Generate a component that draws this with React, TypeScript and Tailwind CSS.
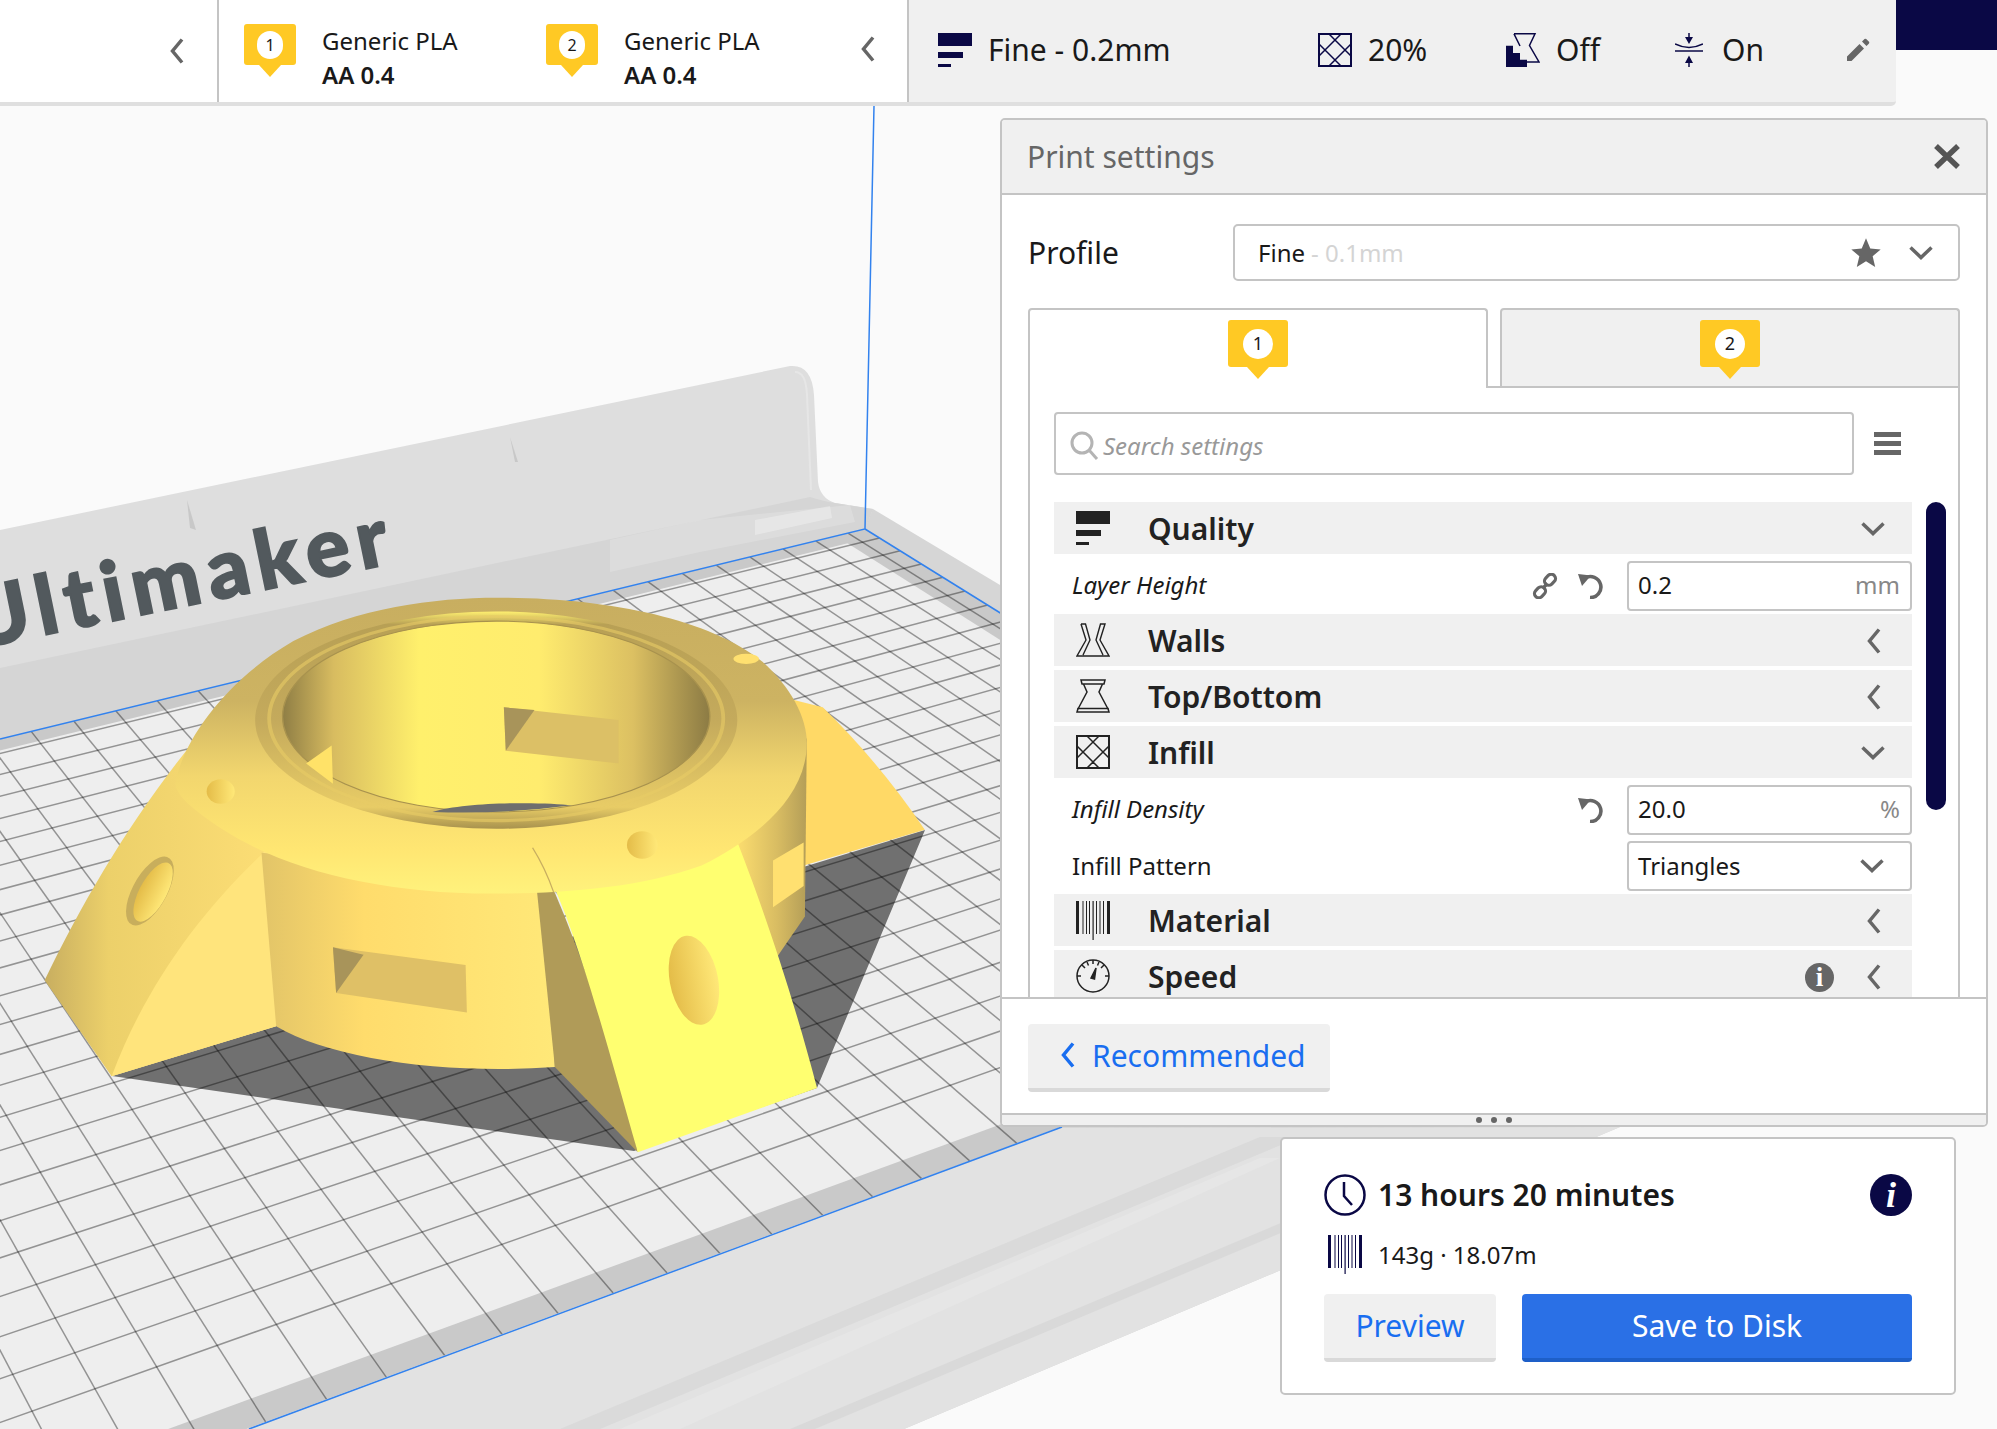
import type { ReactNode } from "react";

const NAVY = "#0a0845";

// build plate projection, numbers taken from the two vanishing points of the bed edges
const A = { x: 865, y: 529 };
const VP_B = { x: -1057, y: -662 };
const VP_A = { x: 6098, y: -741 };
const P_END = -0.2605;
const Q_END = -0.2045;

function proj(p: number, q: number) {
  const w = p + q + 1;
  return {
    x: (p * VP_B.x + q * VP_A.x + A.x) / w,
    y: (p * VP_B.y + q * VP_A.y + A.y) / w,
  };
}

function poly(points: { x: number; y: number }[]) {
  return points.map((pt) => `${pt.x.toFixed(1)},${pt.y.toFixed(1)}`).join(" ");
}

function Viewport() {
  const familyA = Array.from({ length: 25 }, (_, i) => -0.2385 + i * 0.0105);
  const familyB = Array.from({ length: 34 }, (_, i) => -0.00324 - i * 0.0061);
  return (
    <svg className="absolute inset-0" width="1997" height="1429" viewBox="0 0 1997 1429">
      <defs>
        <clipPath id="bed">
          <polygon points={poly([proj(0, 0), proj(P_END, 0), proj(P_END, Q_END), proj(0, Q_END)])} />
        </clipPath>
        <linearGradient id="wing" x1="0" x2="1" y1="0" y2="0">
          <stop offset="0" stopColor="#c8ae60" />
          <stop offset="0.25" stopColor="#ecd06a" />
          <stop offset="1" stopColor="#ffe077" />
        </linearGradient>
        <linearGradient id="drum" x1="0" x2="1" y1="0" y2="0">
          <stop offset="0" stopColor="#e2c468" />
          <stop offset="0.35" stopColor="#ffdc6c" />
          <stop offset="1" stopColor="#ffe878" />
        </linearGradient>
        <linearGradient id="dome" x1="0" x2="0" y1="0" y2="1">
          <stop offset="0" stopColor="#c8ae60" />
          <stop offset="0.35" stopColor="#cdb362" />
          <stop offset="0.6" stopColor="#f2d66e" />
          <stop offset="0.85" stopColor="#ffe672" />
          <stop offset="1" stopColor="#fff27c" />
        </linearGradient>
        <linearGradient id="ring" x1="0" x2="0" y1="0" y2="1">
          <stop offset="0" stopColor="#fff070" />
          <stop offset="0.06" stopColor="#b8a055" />
          <stop offset="0.5" stopColor="#c4aa5c" />
          <stop offset="0.9" stopColor="#e8cc66" />
          <stop offset="1" stopColor="#a8924e" />
        </linearGradient>
        <linearGradient id="bore" x1="0" x2="1" y1="0" y2="0">
          <stop offset="0" stopColor="#8f7e45" />
          <stop offset="0.12" stopColor="#d8bc60" />
          <stop offset="0.32" stopColor="#fff06c" />
          <stop offset="0.6" stopColor="#ffec6e" />
          <stop offset="0.82" stopColor="#dcc062" />
          <stop offset="1" stopColor="#8c7b44" />
        </linearGradient>
        <linearGradient id="side" x1="0" x2="1" y1="0" y2="0">
          <stop offset="0" stopColor="#ffe070" />
          <stop offset="0.6" stopColor="#d8bc62" />
          <stop offset="1" stopColor="#b49e58" />
        </linearGradient>
        <linearGradient id="hole" x1="0" x2="1" y1="0" y2="0">
          <stop offset="0" stopColor="#e4bc48" />
          <stop offset="1" stopColor="#ffe878" />
        </linearGradient>
      </defs>

      <rect width="1997" height="1429" fill="#fafafa" />

      {/* platform around the plate */}
      <polygon points="873,509 1040,609 1700,1000 1620,1127 904,1429 249,1429 0,1429 0,739" fill="#d6d6d6" />
      <polygon points="1060,1128 1620,1127 904,1429 249,1429" fill="#e2e2e2" />
      <polygon points="560,1429 1260,1137 1300,1137 600,1429" fill="#dadada" />
      <polygon points="790,1429 1300,1215 1300,1225 815,1429" fill="#d9d9d9" />
      <polygon points="620,1429 1260,1158 1280,1158 680,1429" fill="#e6e6e6" />

      {/* printable area */}
      <polygon points={poly([proj(0, 0), proj(P_END, 0), proj(P_END, Q_END), proj(0, Q_END)])} fill="#eeeeee" />
      <g clipPath="url(#bed)">
        <polygon points={poly([proj(0, 0), proj(-0.006, 0), proj(-0.006, Q_END), proj(0, Q_END)])} fill="#c9c9c9" />
        <polygon points={poly([proj(0, 0), proj(0, -0.0055), proj(P_END, -0.0055), proj(P_END, 0)])} fill="#c9c9c9" />
        <polygon points={poly([proj(P_END, 0), proj(P_END + 0.0065, 0), proj(P_END + 0.0065, Q_END), proj(P_END, Q_END)])} fill="#c9c9c9" />
        <polygon points="112,1076 634,1151 817,1088 925,830 800,868 276,1026" fill="#707070" />
        {familyA.map((p) => {
          const a = proj(p, 0);
          const b = proj(p, Q_END);
          return <line key={p} x1={a.x} y1={a.y} x2={b.x} y2={b.y} stroke="#000" strokeOpacity="0.38" strokeWidth="1.5" />;
        })}
        {familyB.map((q) => {
          const a = proj(0, q);
          const b = proj(P_END, q);
          return <line key={q} x1={a.x} y1={a.y} x2={b.x} y2={b.y} stroke="#000" strokeOpacity="0.38" strokeWidth="1.5" />;
        })}
      </g>

      {/* back wall */}
      <path d="M0 530 L790 366 Q812 364 814 395 L818 482 Q820 498 835 503 L873 509 L865 529 L0 739 Z" fill="#dedede" />
      <path d="M0 668 L810 497 Q826 502 835 503 L873 509 L865 529 L0 739 Z" fill="#d5d5d5" />
      <path d="M795 372 Q806 372 807 395 L811 490" fill="none" stroke="#e6e6e6" strokeWidth="2" />
      <polygon points="610,540 700,520 850,505 855,522 700,552 610,572" fill="#ffffff" fillOpacity="0.18" />
      <polygon points="755,520 830,506 832,518 755,535" fill="#ffffff" fillOpacity="0.3" />
      <polygon points="187,500 190,528 196,530" fill="#c8c8c8" />
      <polygon points="510,437 515,462 518,462" fill="#c8c8c8" />
      <text
        x="400"
        y="562"
        textAnchor="end"
        transform="rotate(-11.6 400 562)"
        fontFamily="'Lato', sans-serif"
        fontWeight="900"
        fontSize="82"
        letterSpacing="8"
        fill="#52595d"
        stroke="#52595d"
        strokeWidth="2"
      >
        Ultimaker
      </text>

      {/* blue edges of the build volume */}
      <polyline points="874,106 865,529 0,739" fill="none" stroke="#3282ee" strokeWidth="1.5" />
      <line x1="865" y1="529" x2="1010" y2="619" stroke="#3282ee" strokeWidth="1.5" />
      <line x1="249" y1="1429" x2="1062" y2="1127" stroke="#3282ee" strokeWidth="1.5" />

      {/* printed model, authored in crop coordinates */}
      <g transform="translate(0 340) scale(0.6378 0.5102)">
        <path d="M1195 690 L1290 720 Q1380 830 1450 960 L1260 1030 Z" fill="#ffd966" />
        <path d="M70 1255 C130 1100 200 950 295 800 L470 930 L410 1010 L433 1345 L175 1443 Z" fill="url(#wing)" />
        <path d="M175 1443 C230 1260 320 1110 430 985 L433 1345 Z" fill="#ffe47c" />
        <ellipse cx="235" cy="1080" rx="28" ry="72" transform="rotate(22 235 1080)" fill="#c8ae5c" />
        <ellipse cx="240" cy="1082" rx="22" ry="62" transform="rotate(22 240 1082)" fill="url(#hole)" />

        <path d="M1265 780 L1262 1130 L1215 1215 L1150 965 Z" fill="url(#side)" />
        <polygon points="1212,1020 1260,985 1260,1070 1212,1112" fill="#ffe070" />

        <path d="M410 1005 L433 1345 C520 1410 700 1440 870 1425 L860 1060 Z" fill="url(#drum)" />
        <polygon points="522,1190 730,1225 732,1318 527,1280" fill="#dfc066" />
        <polygon points="522,1190 570,1205 527,1280" fill="#a8945a" />

        <path d="M835 995 C880 1090 950 1330 1000 1592 L870 1425 Z" fill="#b09b58" />
        <path d="M835 995 C890 1090 940 1330 1000 1592 L1281 1466 C1240 1270 1190 1090 1150 965 Q1000 1010 835 995 Z" fill="#ffff70" />

        <path
          d="M275 870 C285 790 350 670 460 590 C560 525 680 505 780 505 C950 505 1110 545 1195 630 C1240 680 1265 740 1265 790 C1265 900 1180 980 1100 1030 C1000 1075 880 1085 770 1085 C600 1085 450 1040 350 960 C300 920 275 890 275 870 Z"
          fill="url(#dome)"
        />
        <path d="M835 995 Q855 1035 868 1082" fill="none" stroke="#c8ae60" strokeWidth="2" />
        <ellipse cx="778" cy="745" rx="378" ry="213" fill="url(#ring)" />
        <ellipse cx="778" cy="742" rx="356" ry="200" fill="none" stroke="#e8cc66" strokeOpacity="0.6" strokeWidth="6" />
        <ellipse cx="778" cy="738" rx="335" ry="187" fill="url(#bore)" stroke="#a8924e" strokeWidth="2" />
        <polygon points="790,720 970,745 970,830 793,805" fill="#dcc066" />
        <polygon points="790,720 838,725 793,805" fill="#a8945a" />
        <path d="M678 925 C730 905 850 905 897 912 Q790 930 678 925 Z" fill="#6e6e6e" />
        <polygon points="480,830 520,795 522,870" fill="#ffe268" />
        <ellipse cx="346" cy="885" rx="22" ry="24" fill="url(#hole)" />
        <ellipse cx="1007" cy="990" rx="24" ry="27" fill="url(#hole)" />
        <ellipse cx="1170" cy="625" rx="20" ry="10" fill="#ffe070" />
        <ellipse cx="1088" cy="1255" rx="38" ry="88" transform="rotate(-8 1088 1255)" fill="url(#hole)" />
      </g>
    </svg>
  );
}

function ChevronLeft({ className = "" }: { className?: string }) {
  return (
    <svg className={className} width="15" height="26" viewBox="0 0 15 26" fill="none" stroke="currentColor" strokeWidth="3.5">
      <path d="M13 1.5 L3.5 13 L13 24.5" />
    </svg>
  );
}

function ChevronDown({ className = "" }: { className?: string }) {
  return (
    <svg className={className} width="24" height="14" viewBox="0 0 24 14" fill="none" stroke="currentColor" strokeWidth="3.5">
      <path d="M1.5 1.5 L12 11.5 L22.5 1.5" />
    </svg>
  );
}

function QualityIcon({ className = "" }: { className?: string }) {
  return (
    <svg className={className} width="34" height="34" viewBox="0 0 34 34" fill="currentColor">
      <rect x="0" y="0" width="34" height="13" />
      <rect x="0" y="19" width="25" height="6" />
      <rect x="0" y="31" width="13" height="3" />
    </svg>
  );
}

function InfillIcon({ className = "" }: { className?: string }) {
  return (
    <svg className={className} width="34" height="34" viewBox="0 0 34 34" fill="none" stroke="currentColor" strokeWidth="1.5">
      <rect x="1" y="1" width="32" height="32" strokeWidth="2" />
      <path d="M11 1 L33 23 M1 11 L23 33 M23 1 L1 23 M33 11 L11 33" />
    </svg>
  );
}

function WallsIcon({ className = "" }: { className?: string }) {
  return (
    <svg className={className} width="34" height="34" viewBox="0 0 34 34" fill="none" stroke="currentColor" strokeWidth="1.4">
      <path d="M5 1 H9.5 L14 17 L7 32 M5 1 L10 17 L1 33 H33 L24 17 L29 1 H24.5 L20 17 L27 32" />
    </svg>
  );
}

function TopBottomIcon({ className = "" }: { className?: string }) {
  return (
    <svg className={className} width="34" height="34" viewBox="0 0 34 34" fill="none" stroke="currentColor" strokeWidth="1.5">
      <path d="M5 1 H29 L28 5 H6 Z" />
      <path d="M7.5 5 L11 13 L2 30 M26.5 5 L23 13 L32 30" />
      <path d="M1 33 H33 L32 29.5 H2 Z" />
    </svg>
  );
}

function MaterialIcon({ className = "" }: { className?: string }) {
  return (
    <svg className={className} width="34" height="39" viewBox="0 0 34 39" fill="currentColor">
      <rect x="0" y="0" width="3" height="33" />
      <rect x="6.5" y="0" width="1" height="33" />
      <rect x="10" y="0" width="1" height="33" />
      <rect x="13" y="0" width="1" height="33" />
      <rect x="16.5" y="0" width="1.2" height="39" />
      <rect x="20" y="0" width="1" height="33" />
      <rect x="23.5" y="0" width="1" height="33" />
      <rect x="27" y="0" width="1" height="33" />
      <rect x="31" y="0" width="3" height="33" />
    </svg>
  );
}

function SpeedIcon({ className = "" }: { className?: string }) {
  return (
    <svg className={className} width="34" height="34" viewBox="0 0 34 34" fill="none" stroke="currentColor" strokeWidth="1.5">
      <circle cx="17" cy="17" r="16" />
      <path d="M17 1 V5 M6 6 L9 9 M28 6 L25 9 M1 17 H5 M33 17 H29 M11 3 L12.5 6.5 M23 3 L21.5 6.5" />
      <path d="M15 19 L20 9 L18.5 20 Z" fill="currentColor" />
    </svg>
  );
}

function SupportIcon() {
  return (
    <svg width="34" height="34" viewBox="0 0 34 34" fill="none" stroke={NAVY} strokeWidth="1.5">
      <path d="M8 0.8 H29 L23.5 12.5 L33 29 H21 M8 0.8 L14 13" />
      <path d="M0 12.7 H7 V20 H14 V26.7 H21 V34 H0 Z" fill={NAVY} stroke="none" />
    </svg>
  );
}

function AdhesionIcon() {
  return (
    <svg width="28" height="34" viewBox="0 0 28 34" fill="none" stroke={NAVY} strokeWidth="1.5">
      <path d="M14 0 V7 M14 25 V34" />
      <path d="M10 4 H18 L14 11 Z M10 30 H18 L14 22.5 Z" fill={NAVY} stroke="none" />
      <path d="M0 11 Q14 18 28 11 M0 18 H28" />
    </svg>
  );
}

function Pencil() {
  return (
    <svg width="24" height="24" viewBox="0 0 24 24" fill="#666666">
      <path d="M1 18.5 V23 H5.5 L18 10.5 L13.5 6 Z M20.5 8 L23 5.5 Q23.6 4.6 23 3.8 L20.2 1 Q19.4 0.4 18.5 1 L16 3.5 Z" />
    </svg>
  );
}

function UndoIcon() {
  return (
    <svg width="28" height="26" viewBox="0 0 28 26" fill="none" stroke="#666666" strokeWidth="3.6">
      <path d="M8 5 A10.5 10.5 0 1 1 13 24.5" />
      <path d="M1 1 L14 2.5 L5 13 Z" fill="#666666" stroke="none" />
    </svg>
  );
}

function LinkIcon() {
  return (
    <svg width="26" height="26" viewBox="0 0 26 26" fill="none" stroke="#666666" strokeWidth="3.2">
      <rect x="12" y="2.5" width="12" height="8.5" rx="4.2" transform="rotate(-45 18 6.75)" />
      <rect x="2" y="15" width="12" height="8.5" rx="4.2" transform="rotate(-45 8 19.25)" />
      <path d="M10.5 15.5 L15.5 10.5" />
    </svg>
  );
}

function Badge({ n, tab = false }: { n: number; tab?: boolean }) {
  return (
    <div
      className={
        tab
          ? "relative flex h-[47px] w-[60px] shrink-0 items-center justify-center rounded-[3px] bg-[#ffc924]"
          : "relative flex h-[41px] w-[52px] shrink-0 items-center justify-center rounded-[3px] bg-[#ffc924]"
      }
    >
      <div
        className={
          tab
            ? "flex h-[30px] w-[30px] items-center justify-center rounded-full bg-white text-[18px] text-[#191919]"
            : "flex h-[28px] w-[26px] items-center justify-center rounded-full bg-white text-[16px] text-[#191919]"
        }
      >
        {n}
      </div>
      <div className="absolute left-1/2 top-full h-0 w-0 -translate-x-1/2 border-x-[11px] border-t-[12px] border-x-transparent border-t-[#ffc924]" />
    </div>
  );
}

function Extruder({ n }: { n: number }) {
  return (
    <div className="flex w-[302px] items-start pt-[24px]">
      <Badge n={n} />
      <div className="ml-[26px] text-[24px] leading-[34px] text-[#191919]">
        <div>Generic PLA</div>
        <div className="font-semibold">AA 0.4</div>
      </div>
    </div>
  );
}

function TopBar() {
  return (
    <div className="relative flex h-[106px] text-[#191919]">
      <div className="flex w-[217px] items-center justify-end border-b-4 border-[#dfdfdf] bg-white pr-[33px]">
        <ChevronLeft className="text-[#666666]" />
      </div>
      <div className="w-[690px] border-b-4 border-[#dfdfdf] bg-white">
        <div className="flex h-full items-start border-l-2 border-[#c4c4c4] pl-[25px]">
          <Extruder n={1} />
          <Extruder n={2} />
          <ChevronLeft className="ml-[12px] mt-[36px] text-[#666666]" />
        </div>
      </div>
      <div className="w-[989px] rounded-br-[5px] border-b-4 border-[#dfdfdf] bg-[#f0f0f0]">
        <div className="flex h-full items-center border-l-2 border-[#c4c4c4] pb-[3px] pl-[29px] text-[30px]">
          <div className="flex w-[380px] items-center gap-[16px]">
            <QualityIcon className="text-[#0a0845]" />
            Fine - 0.2mm
          </div>
          <div className="flex w-[188px] items-center gap-[16px]">
            <InfillIcon className="text-[#0a0845]" />
            20%
          </div>
          <div className="flex w-[169px] items-center gap-[16px]">
            <SupportIcon />
            Off
          </div>
          <div className="flex w-[171px] items-center gap-[19px]">
            <AdhesionIcon />
            On
          </div>
          <Pencil />
        </div>
      </div>
      <div className="h-[50px] flex-1 bg-[#0a0845]" />
    </div>
  );
}

function Section({
  icon,
  label,
  open = false,
  info = false,
}: {
  icon: ReactNode;
  label: string;
  open?: boolean;
  info?: boolean;
}) {
  return (
    <div className="flex h-[52px] shrink-0 items-center bg-[#f0f0f0] pl-[22px] pr-[26px] text-[#222222]">
      {icon}
      <span className="ml-[38px] text-[30px] font-semibold">{label}</span>
      {info && (
        <div className="ml-auto mr-[26px] mt-[2px] flex h-[29px] w-[29px] items-center justify-center rounded-full bg-[#666666] font-['Liberation_Serif',serif] text-[27px] font-bold text-white">
          i
        </div>
      )}
      <div className={info ? "mt-[2px] flex w-[26px] justify-center" : "ml-auto mt-[2px] flex w-[26px] justify-center"}>
        {open ? <ChevronDown className="text-[#666666]" /> : <ChevronLeft className="text-[#666666]" />}
      </div>
    </div>
  );
}

function Field({ children }: { children: ReactNode }) {
  return (
    <div className="flex h-[50px] w-[285px] shrink-0 items-center self-start rounded-[4px] border-2 border-[#c4c4c4] bg-white pl-[9px] pr-[10px] text-[24px] text-[#191919]">
      {children}
    </div>
  );
}

function PrintSettings() {
  return (
    <div className="ml-[1000px] mt-[12px] flex h-[1009px] w-[988px] flex-col overflow-hidden rounded-[5px] border-2 border-[#c4c4c4] bg-white text-[#191919]">
      <div className="flex h-[75px] shrink-0 items-center justify-between border-b-2 border-[#c4c4c4] bg-[#f0f0f0] pl-[25px] pr-[26px]">
        <span className="text-[30px] text-[#666666]">Print settings</span>
        <svg width="26" height="25" viewBox="0 0 26 25" stroke="#555555" strokeWidth="5.5" fill="none">
          <path d="M2 2 L24 23 M24 2 L2 23" />
        </svg>
      </div>

      <div className="mt-[29px] flex h-[57px] shrink-0 items-center pl-[26px]">
        <span className="w-[205px] text-[30px]">Profile</span>
        <div className="flex h-[57px] w-[727px] items-center rounded-[5px] border-2 border-[#c4c4c4] pl-[23px] pr-[25px] text-[24px]">
          Fine<span className="ml-[6px] text-[#d4d4d4]">- 0.1mm</span>
          <svg className="ml-auto" width="34" height="32" viewBox="0 0 24 24" fill="#666666">
            <path d="M12 1 L15.2 8.6 L23 9.3 L17 14.4 L18.9 22.5 L12 18.1 L5.1 22.5 L7 14.4 L1 9.3 L8.8 8.6 Z" />
          </svg>
          <ChevronDown className="ml-[26px] text-[#666666]" />
        </div>
      </div>

      <div className="ml-[26px] mt-[27px] flex h-[80px] w-[932px] shrink-0">
        <div className="flex h-[80px] w-[460px] justify-center rounded-t-[4px] border-x-2 border-t-2 border-[#c4c4c4] bg-white pt-[10px]">
          <Badge n={1} tab />
        </div>
        <div className="flex-1 border-b-2 border-[#c4c4c4] pl-[12px]">
          <div className="flex h-full justify-center rounded-t-[4px] border-x-2 border-t-2 border-[#c4c4c4] bg-[#f0f0f0] pt-[10px]">
            <Badge n={2} tab />
          </div>
        </div>
      </div>

      <div className="ml-[26px] h-[609px] w-[932px] shrink-0 overflow-hidden border-x-2 border-[#c4c4c4] pl-[24px]">
        <div className="flex items-center pt-[24px]">
          <div className="flex h-[63px] w-[800px] items-center gap-[3px] rounded-[4px] border-2 border-[#c4c4c4] pl-[14px] text-[24px] italic text-[#999999]">
            <svg width="30" height="30" viewBox="0 0 30 30" fill="none" stroke="#b4b4b4" strokeWidth="3" className="mt-[4px]">
              <circle cx="12" cy="12" r="10" />
              <path d="M19 19 L27 28" />
            </svg>
            <span className="pt-[5px]">Search settings</span>
          </div>
          <div className="ml-[20px] flex w-[27px] flex-col gap-[4px]">
            <div className="h-[5px] bg-[#666666]" />
            <div className="h-[5px] bg-[#666666]" />
            <div className="h-[5px] bg-[#666666]" />
          </div>
        </div>

        <div className="mt-[27px] flex">
          <div className="flex w-[858px] shrink-0 flex-col gap-[4px]">
            <Section icon={<QualityIcon />} label="Quality" open />
            <div className="flex h-[52px] shrink-0 items-center pl-[18px] pt-[3px] text-[24px] italic">
              <span className="pb-[2px]">Layer Height</span>
              <div className="ml-auto mr-[22px] flex items-center gap-[19px]">
                <LinkIcon />
                <UndoIcon />
              </div>
              <Field>
                <span className="pb-[2px] not-italic">0.2</span>
                <span className="ml-auto pb-[2px] not-italic text-[#888888]">mm</span>
              </Field>
            </div>
            <Section icon={<WallsIcon />} label="Walls" />
            <Section icon={<TopBottomIcon />} label="Top/Bottom" />
            <Section icon={<InfillIcon />} label="Infill" open />
            <div className="flex h-[52px] shrink-0 items-center pl-[18px] pt-[3px] text-[24px] italic">
              <span className="pb-[2px]">Infill Density</span>
              <div className="ml-auto mr-[22px] flex items-center">
                <UndoIcon />
              </div>
              <Field>
                <span className="pb-[2px] not-italic">20.0</span>
                <span className="ml-auto pb-[2px] not-italic text-[#888888]">%</span>
              </Field>
            </div>
            <div className="flex h-[52px] shrink-0 items-center justify-between pl-[18px] pt-[3px] text-[24px]">
              Infill Pattern
              <Field>
                Triangles
                <ChevronDown className="ml-auto mr-[16px] text-[#666666]" />
              </Field>
            </div>
            <Section icon={<MaterialIcon />} label="Material" />
            <Section icon={<SpeedIcon />} label="Speed" info />
          </div>
          <div className="ml-[14px] h-[308px] w-[20px] rounded-full bg-[#0a0845]" />
        </div>
      </div>

      <div className="flex h-[116px] shrink-0 items-start border-t-2 border-[#c4c4c4] pl-[26px] pt-[25px]">
        <div className="flex h-[68px] w-[302px] items-center gap-[17px] rounded-[4px] border-b-4 border-[#d9d9d9] bg-[#f0f0f0] pb-[2px] pl-[32px] text-[30px] text-[#196ef0]">
          <ChevronLeft />
          Recommended
        </div>
      </div>

      <div className="flex flex-1 items-center justify-center gap-[9px] border-t-2 border-[#c4c4c4] bg-[#f0f0f0]">
        <div className="h-[6px] w-[6px] rounded-full bg-[#666666]" />
        <div className="h-[6px] w-[6px] rounded-full bg-[#666666]" />
        <div className="h-[6px] w-[6px] rounded-full bg-[#666666]" />
      </div>
    </div>
  );
}

function ActionCard() {
  return (
    <div className="ml-[1280px] mt-[10px] h-[258px] w-[676px] rounded-[5px] border-2 border-[#c4c4c4] bg-white px-[42px] pt-[35px] text-[#191919]">
      <div className="flex h-[42px] items-center">
        <svg width="42" height="42" viewBox="0 0 42 42" fill="none" stroke="#0a0845" strokeWidth="2.5">
          <circle cx="21" cy="21" r="19.5" />
          <path d="M20 8 V22 L28 31" />
        </svg>
        <span className="ml-[12px] pb-[2px] text-[30px] font-semibold">13 hours 20 minutes</span>
        <div className="ml-auto flex h-[42px] w-[42px] items-center justify-center rounded-full bg-[#0a0845] font-['Liberation_Serif',serif] text-[36px] font-bold italic text-white">
          i
        </div>
      </div>
      <div className="mt-[19px] flex h-[39px] items-center">
        <MaterialIcon className="ml-[4px] text-[#0a0845]" />
        <span className="ml-[16px] text-[24px]">143g · 18.07m</span>
      </div>
      <div className="mt-[20px] flex gap-[26px] text-[30px]">
        <div className="flex h-[68px] w-[172px] items-center justify-center rounded-[4px] border-b-4 border-[#d9d9d9] bg-[#f0f0f0] pb-[2px] text-[#196ef0]">
          Preview
        </div>
        <div className="flex h-[68px] w-[390px] items-center justify-center rounded-[4px] border-b-4 border-[#1e5fc8] bg-[#2a70e6] pb-[2px] text-white">
          Save to Disk
        </div>
      </div>
    </div>
  );
}

export default function App() {
  return (
    <div className="relative h-[1429px] w-[1997px] overflow-hidden bg-[#fafafa] font-['Noto_Sans',sans-serif]">
      <Viewport />
      <div className="relative">
        <TopBar />
        <PrintSettings />
        <ActionCard />
      </div>
    </div>
  );
}
